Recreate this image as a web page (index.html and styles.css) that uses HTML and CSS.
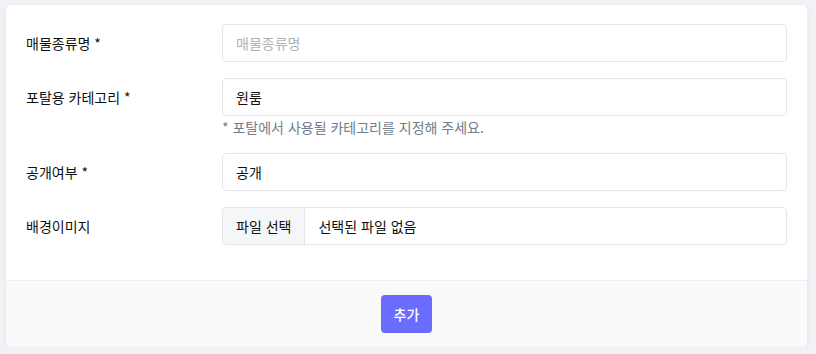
FILE: index.html
```html
<!DOCTYPE html>
<html lang="ko">
<head>
  <meta charset="UTF-8">
  <meta name="viewport" content="width=device-width, initial-scale=1.0">
  <title>매물종류 추가</title>
  <link rel="stylesheet" href="styles.css">
</head>
<body>
  <div class="card">
    <div class="card-body">
      <div class="form-row">
        <label class="form-label" for="typeName">매물종류명 *</label>
        <div class="form-field">
          <input type="text" id="typeName" class="form-input" placeholder="매물종류명">
        </div>
      </div>

      <div class="form-row">
        <label class="form-label" for="category">포탈용 카테고리 *</label>
        <div class="form-field">
          <div class="form-input select-box" id="category">원룸</div>
          <div class="help-text">* 포탈에서 사용될 카테고리를 지정해 주세요.</div>
        </div>
      </div>

      <div class="form-row">
        <label class="form-label" for="visible">공개여부 *</label>
        <div class="form-field">
          <div class="form-input select-box" id="visible">공개</div>
        </div>
      </div>

      <div class="form-row">
        <label class="form-label">배경이미지</label>
        <div class="form-field">
          <div class="file-box">
            <span class="file-button">파일 선택</span>
            <span class="file-name">선택된 파일 없음</span>
          </div>
        </div>
      </div>
    </div>

    <div class="card-footer">
      <button class="btn-primary">추가</button>
    </div>
  </div>
</body>
</html>
```

FILE: styles.css
```css
* {
  box-sizing: border-box;
}
body {
  margin: 0;
  padding: 5px 9px 0 6px;
  font-family: "Noto Sans CJK KR", "Noto Sans", sans-serif;
  font-size: 14px;
  color: #0e1013;
  background-color: #f1f2f6;
}
.card {
  background: #fff;
  border-radius: 5px;
  box-shadow: 0 1px 4px rgba(60, 70, 90, 0.08);
  overflow: hidden;
}
.card-body {
  padding: 19px 20px 35px 20px;
}
.form-row {
  display: grid;
  grid-template-columns: 196px 1fr;
  align-items: start;
  margin-bottom: 16px;
}
.form-row:last-child {
  margin-bottom: 0;
}
.form-label {
  line-height: 38px;
  color: #0e1013;
}
.form-input {
  display: block;
  width: 100%;
  height: 38px;
  padding: 0 13px;
  border: 1px solid #e3e5e8;
  border-radius: 4px;
  font-family: inherit;
  font-size: 14px;
  color: #0e1013;
  background: #fff;
  outline: none;
}
.form-input::placeholder {
  color: #aab2bb;
}
.select-box {
  line-height: 36px;
}
.help-text {
  margin-top: 1px;
  line-height: 20px;
  color: #737d8c;
}
.file-box {
  display: flex;
  height: 38px;
  border: 1px solid #e3e5e8;
  border-radius: 4px;
  overflow: hidden;
}
.file-button {
  padding: 0 13px;
  line-height: 36px;
  background-color: #f5f6f8;
  border-right: 1px solid #e3e5e8;
}
.file-name {
  padding: 0 13px;
  line-height: 36px;
}
.card-footer {
  display: flex;
  justify-content: center;
  padding: 14px 0;
  background-color: #fafafb;
  border-top: 1px solid #eceef3;
}
.btn-primary {
  height: 38px;
  padding: 0 13px;
  border: none;
  border-radius: 4px;
  background-color: #696cff;
  color: #fff;
  font-family: inherit;
  font-size: 14px;
  font-weight: 500;
  cursor: pointer;
}
```
